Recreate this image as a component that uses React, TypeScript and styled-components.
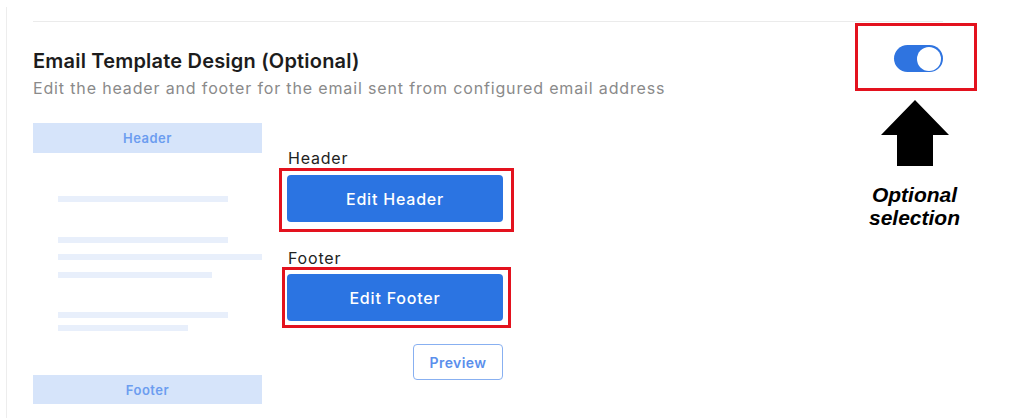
import React from "react";
import styled, { createGlobalStyle } from "styled-components";

const GlobalStyle = createGlobalStyle`
  html, body { margin: 0; padding: 0; background: #ffffff; }
  body { font-family: Inter, "Noto Sans", sans-serif; color: #1f1f1f; }
  * { box-sizing: border-box; }
`;

const Page = styled.div`
  width: 1013px;
  height: 418px;
  padding: 7px 0 0 6px;
  overflow: hidden;
`;

const Card = styled.div`
  height: 100%;
  border-left: 1px solid #ededed;
  padding: 14px 70px 0 26px;
`;

const Divider = styled.div`
  height: 1px;
  background: #ebebeb;
`;

const Section = styled.section`
  display: flex;
  justify-content: space-between;
  align-items: flex-start;
  padding-top: 27px;
`;

const Main = styled.div`
  display: flex;
  flex-direction: column;
`;

const Title = styled.h2`
  margin: 0;
  font-size: 20px;
  line-height: 24px;
  font-weight: 600;
  letter-spacing: 0.2px;
  color: #1c1c1c;
`;

const Subtitle = styled.p`
  margin: 4px 0 0;
  font-size: 16px;
  line-height: 22px;
  letter-spacing: 0.85px;
  color: #8a8a8a;
`;

const Body = styled.div`
  display: flex;
  gap: 25px;
  margin-top: 24px;
`;

const PreviewPanel = styled.div`
  width: 229px;
  height: 281px;
  display: flex;
  flex-direction: column;
`;

const Band = styled.div<{ $h: number }>`
  height: ${(p) => p.$h}px;
  background: #d6e4fa;
  color: #6c9df0;
  font-size: 13px;
  font-weight: 600;
  letter-spacing: 0.5px;
  display: flex;
  align-items: center;
  justify-content: center;
`;

const Lines = styled.div`
  flex: 1;
  display: flex;
  flex-direction: column;
  padding-left: 25px;
`;

const Line = styled.div<{ $w: number; $top: number }>`
  width: ${(p) => p.$w}px;
  height: 6px;
  margin-top: ${(p) => p.$top}px;
  background: #e8effb;
`;

const Editor = styled.div`
  display: flex;
  flex-direction: column;
  width: 216px;
  margin-top: 25px;
`;

const Label = styled.div<{ $top?: number }>`
  font-size: 16px;
  line-height: 20px;
  letter-spacing: 0.8px;
  color: #222;
  padding-left: 1px;
  margin-top: ${(p) => p.$top ?? 0}px;
`;

const Annotated = styled.div`
  position: relative;
  display: flex;
`;

const RedFrame = styled.span<{ $t: number; $r: number; $b: number; $l: number }>`
  position: absolute;
  top: -${(p) => p.$t}px;
  right: -${(p) => p.$r}px;
  bottom: -${(p) => p.$b}px;
  left: -${(p) => p.$l}px;
  border: 3px solid #e3121e;
  pointer-events: none;
`;

const PrimaryButton = styled.button<{ $top: number }>`
  width: 216px;
  height: 47px;
  margin-top: ${(p) => p.$top}px;
  border: none;
  border-radius: 4px;
  background: #2b74e2;
  color: #ffffff;
  font-family: inherit;
  font-size: 16px;
  font-weight: 500;
  letter-spacing: 0.8px;
`;

const PreviewButton = styled.button`
  align-self: flex-end;
  width: 90px;
  height: 36px;
  margin-top: 23px;
  border: 1.5px solid #88b0f1;
  border-radius: 4px;
  background: #ffffff;
  color: #5b8fec;
  font-family: inherit;
  font-size: 14px;
  font-weight: 600;
  letter-spacing: 0.4px;
`;

const ToggleWrap = styled.div`
  position: relative;
  margin-top: -4px;
`;

const Toggle = styled.div`
  width: 49px;
  height: 27px;
  border-radius: 14px;
  background: #2f74e0;
  display: flex;
  align-items: center;
  justify-content: flex-end;
  padding: 0 2px;
`;

const Knob = styled.div`
  width: 24px;
  height: 24px;
  border-radius: 50%;
  background: #ffffff;
`;

const Callout = styled.div`
  position: absolute;
  top: calc(100% + 28px);
  left: 50%;
  transform: translateX(calc(-50% - 4px));
  display: flex;
  flex-direction: column;
  align-items: center;
  width: 120px;
`;

const Caption = styled.div`
  margin-top: 17px;
  font-family: "Liberation Sans", Arial, sans-serif;
  font-style: italic;
  font-weight: 700;
  font-size: 21px;
  line-height: 23px;
  color: #000;
  text-align: center;
`;

const UpArrow = () => (
  <svg width="68" height="66" viewBox="0 0 68 66">
    <polygon points="34,0 68,35 52,35 52,66 16,66 16,35 0,35" fill="#000" />
  </svg>
);

export default function App() {
  return (
    <>
      <GlobalStyle />
      <Page>
        <Card>
          <Divider />
          <Section>
            <Main>
              <Title>Email Template Design (Optional)</Title>
              <Subtitle>Edit the header and footer for the email sent from configured email address</Subtitle>
              <Body>
                <PreviewPanel>
                  <Band $h={30}>Header</Band>
                  <Lines>
                    <Line $w={170} $top={43} />
                    <Line $w={170} $top={35} />
                    <Line $w={204} $top={11} />
                    <Line $w={154} $top={12} />
                    <Line $w={170} $top={34} />
                    <Line $w={130} $top={7} />
                  </Lines>
                  <Band $h={29}>Footer</Band>
                </PreviewPanel>
                <Editor>
                  <Label>Header</Label>
                  <Annotated>
                    <PrimaryButton $top={7}>Edit Header</PrimaryButton>
                    <RedFrame $t={0} $r={11} $b={10} $l={8} />
                  </Annotated>
                  <Label $top={26}>Footer</Label>
                  <Annotated>
                    <PrimaryButton $top={6}>Edit Footer</PrimaryButton>
                    <RedFrame $t={1} $r={8} $b={7} $l={5} />
                  </Annotated>
                  <PreviewButton>Preview</PreviewButton>
                </Editor>
              </Body>
            </Main>
            <ToggleWrap>
              <Toggle>
                <Knob />
              </Toggle>
              <RedFrame $t={22} $r={34} $b={19} $l={39} />
              <Callout>
                <UpArrow />
                <Caption>
                  Optional
                  <br />
                  selection
                </Caption>
              </Callout>
            </ToggleWrap>
          </Section>
        </Card>
      </Page>
    </>
  );
}
